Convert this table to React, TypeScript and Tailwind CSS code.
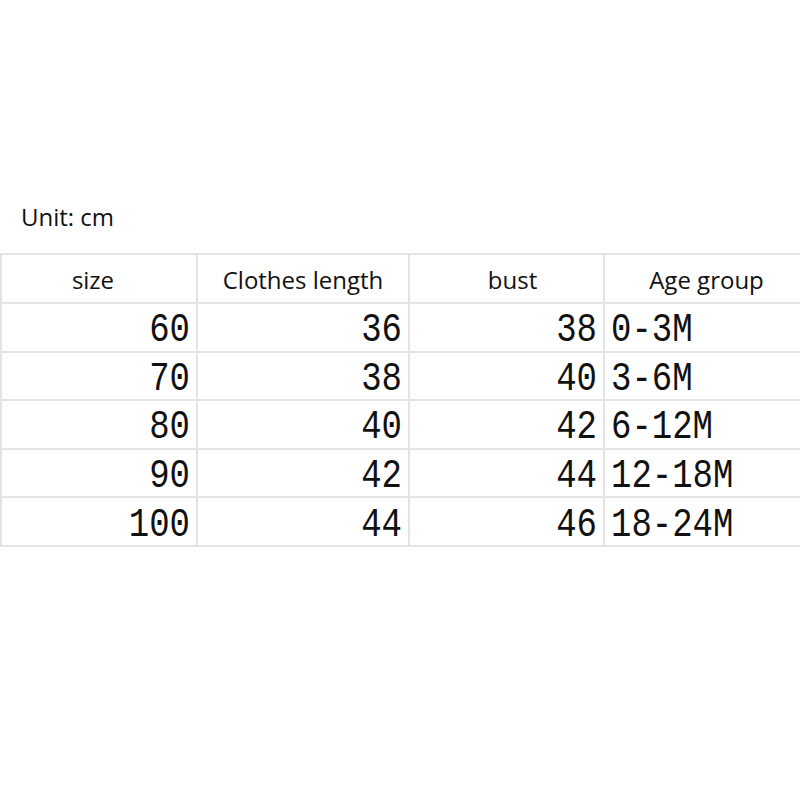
import React from "react"

const rows = [
  ["60", "36", "38", "0-3M"],
  ["70", "38", "40", "3-6M"],
  ["80", "40", "42", "6-12M"],
  ["90", "42", "44", "12-18M"],
  ["100", "44", "46", "18-24M"],
]

const headers = [
  { label: "size", pad: "pr-[12px]" },
  { label: "Clothes length", pad: "" },
  { label: "bust", pad: "pl-[12px]" },
  { label: "Age group", pad: "pl-[8px]" },
]

export default function App() {
  return (
    <div className="w-[800px] h-[800px] bg-white overflow-hidden">
      <div className="pt-[201px] pl-[21px] h-[253px] text-[24px] leading-[32px] text-[#111] font-['Open_Sans',sans-serif]">
        Unit: cm
      </div>
      <table className="border-collapse table-fixed w-[800px]">
        <colgroup>
          <col className="w-[196px]" />
          <col className="w-[212px]" />
          <col className="w-[195px]" />
          <col className="w-[197px]" />
        </colgroup>
        <thead>
          <tr className="h-[49px]">
            {headers.map((h) => (
              <th
                key={h.label}
                className={`border-2 border-[#e4e4e4] font-normal text-center text-[24px] text-[#111] pt-[2px] font-['Open_Sans',sans-serif] ${h.pad}`}
              >
                {h.label}
              </th>
            ))}
          </tr>
        </thead>
        <tbody>
          {rows.map((r) => (
            <tr key={r[0]} className="h-[48.6px]">
              {r.map((c, i) => (
                <td
                  key={i}
                  className={`border-2 border-[#e4e4e4] text-[34px] leading-none pt-[6px] text-[#111] font-['Liberation_Mono',monospace] ${
                    i === 3 ? "text-left pl-[6px]" : "text-right pr-[6px]"
                  }`}
                >
                  <span className="inline-block scale-y-[1.2]">{c}</span>
                </td>
              ))}
            </tr>
          ))}
        </tbody>
      </table>
    </div>
  )
}
